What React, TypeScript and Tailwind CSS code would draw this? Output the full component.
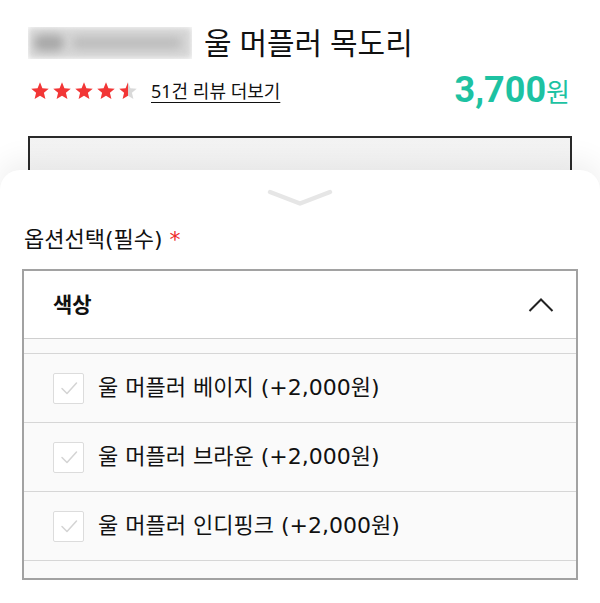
import React from 'react';

const options = [
  '울 머플러 베이지 (+2,000원)',
  '울 머플러 브라운 (+2,000원)',
  '울 머플러 인디핑크 (+2,000원)',
];

const wide = { fontFamily: '"DejaVu Sans", "Noto Sans CJK KR", sans-serif' };

function Star({ fill }: { fill: 'full' | 'half' | 'empty' }) {
  const id = `half-${fill}`;
  return (
    <svg width="20" height="20" viewBox="0 0 24 24">
      <defs>
        <linearGradient id={id} x1="0" x2="1" y1="0" y2="0">
          <stop offset="50%" stopColor="#f23636" />
          <stop offset="50%" stopColor="#d9d9d9" />
        </linearGradient>
      </defs>
      <polygon
        points="12,1.5 14.9,8.6 22.5,9.2 16.7,14.1 18.5,21.6 12,17.6 5.5,21.6 7.3,14.1 1.5,9.2 9.1,8.6"
        fill={fill === 'full' ? '#f23636' : fill === 'half' ? `url(#${id})` : '#d9d9d9'}
      />
    </svg>
  );
}

function CheckBox() {
  return (
    <div className="flex h-[31px] w-[31px] shrink-0 items-center justify-center rounded-[2px] border-[1.5px] border-[#dcdcdc] bg-white">
      <svg width="20" height="20" viewBox="0 0 20 20" fill="none">
        <path d="M3 10.5l5 5L17.5 5" stroke="#d4d4d4" strokeWidth="1.5" strokeLinecap="round" strokeLinejoin="round" />
      </svg>
    </div>
  );
}

export default function App() {
  return (
    <div
      className="relative h-[603px] w-[600px] overflow-hidden bg-white text-[#111]"
      style={{ fontFamily: '"Noto Sans", "Noto Sans CJK KR", sans-serif' }}
    >
      {/* Product header */}
      <div className="flex items-center pl-[28px] pt-[24px]">
        <div className="relative h-[32px] w-[164px] overflow-hidden">
          <div className="absolute inset-0 bg-[#d6d6d6] blur-[3px]" />
          <div className="absolute left-[6px] top-[8px] h-[16px] w-[30px] rounded-full bg-[#a9a9a9] blur-[4px]" />
          <div className="absolute left-[44px] top-[10px] h-[12px] w-[110px] rounded-full bg-[#bdbdbd] blur-[4px]" />
        </div>
        <h1 className="ml-[12px] text-[30px] leading-[38px] font-normal">울 머플러 목도리</h1>
      </div>

      <div className="flex items-center justify-between pl-[30px] pr-[30px] pt-[8px]">
        <div className="flex items-center">
          <div className="flex items-center gap-[2px]">
            <Star fill="full" />
            <Star fill="full" />
            <Star fill="full" />
            <Star fill="full" />
            <Star fill="half" />
          </div>
          <span className="ml-[13px] text-[18px] leading-[24px] underline underline-offset-[4px]">51건 리뷰 더보기</span>
        </div>
        <div className="flex items-baseline text-[#1dc2a2]">
          <span className="text-[36px] leading-[40px] font-bold" style={{ fontFamily: 'Roboto, "Noto Sans CJK KR", sans-serif' }}>
            3,700
          </span>
          <span className="text-[26px] leading-[40px]">원</span>
        </div>
      </div>

      {/* Box behind the sheet */}
      <div className="mx-[28px] mt-[24px] h-[80px] border-2 border-[#2a2a2a] bg-gradient-to-b from-[#f3f3f3] to-[#fafafa]" />

      {/* Bottom sheet */}
      <div className="absolute inset-x-0 bottom-0 top-[170px] rounded-t-[20px] bg-white shadow-[0_-8px_30px_rgba(0,0,0,0.07)]">
        <div className="flex justify-center pt-[18px]">
          <svg width="68" height="20" viewBox="0 0 68 20" fill="none">
            <path d="M4 4L34 15.5L64 4" stroke="#e6e6e6" strokeWidth="4.5" strokeLinecap="round" strokeLinejoin="round" />
          </svg>
        </div>

        <div className="mt-[17px] pl-[24px] text-[22px] leading-[30px]" style={wide}>
          옵션선택(필수) <span className="text-[#ee2a2a]">*</span>
        </div>

        <div className="mx-[22px] mt-[14px] h-[311px] overflow-hidden border-2 border-[#a2a2a2]">
          <div className="flex h-[68px] items-center justify-between border-b border-[#cfcfcf] pl-[29px] pr-[22px]">
            <span className="text-[21px] font-bold">색상</span>
            <svg width="26" height="16" viewBox="0 0 26 16" fill="none">
              <path d="M1.5 14L13 2.5L24.5 14" stroke="#222" strokeWidth="2" />
            </svg>
          </div>
          <div className="bg-[#fafafa]">
            <div className="h-[15px] border-b border-[#d6d6d6]" />
            {options.map((o) => (
              <div key={o} className="flex h-[69px] items-center border-b border-[#d6d6d6] pl-[29px]">
                <CheckBox />
                <span className="ml-[14px] text-[22px] leading-[28px]" style={wide}>
                  {o}
                </span>
              </div>
            ))}
            <div className="flex h-[69px] items-center pl-[29px]">
              <CheckBox />
            </div>
          </div>
        </div>
      </div>
    </div>
  );
}
